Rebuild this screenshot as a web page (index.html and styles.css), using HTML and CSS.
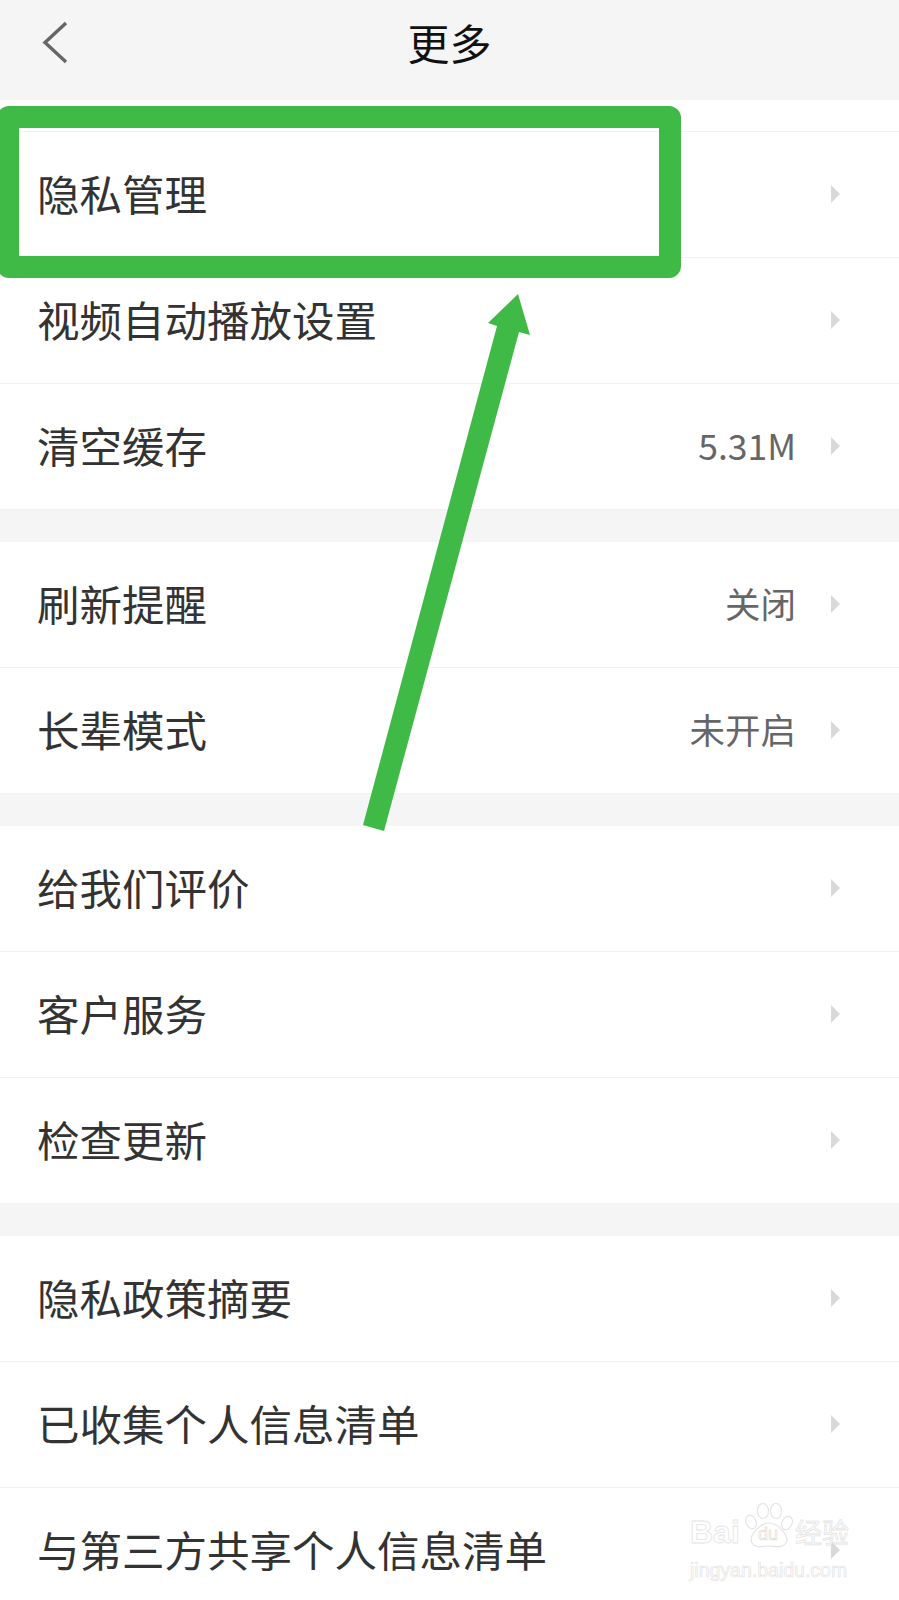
FILE: index.html
```html
<!DOCTYPE html>
<html>
	<head>
		<meta charset="UTF-8">
		<title>更多</title>
		<link rel="stylesheet" href="styles.css">
	</head>
	<body>
		<div class="wrap">
			<div class="top">
				<svg class="back" width="30" height="46" viewBox="0 0 30 46">
					<polyline points="24,3 3,22.5 24,42" fill="none" stroke="#666" stroke-width="3.4"/>
				</svg>
				<div class="title">更多</div>
			</div>
			<div class="strip"></div>
			<div class="group">
				<div class="row"><div class="name">隐私管理</div><div class="arrow"></div></div>
				<div class="row"><div class="name">视频自动播放设置</div><div class="arrow"></div></div>
				<div class="row"><div class="name">清空缓存</div><div class="val">5.31M</div><div class="arrow"></div></div>
			</div>
			<div class="group">
				<div class="row"><div class="name">刷新提醒</div><div class="val">关闭</div><div class="arrow"></div></div>
				<div class="row"><div class="name">长辈模式</div><div class="val">未开启</div><div class="arrow"></div></div>
			</div>
			<div class="group">
				<div class="row"><div class="name">给我们评价</div><div class="arrow"></div></div>
				<div class="row"><div class="name">客户服务</div><div class="arrow"></div></div>
				<div class="row"><div class="name">检查更新</div><div class="arrow"></div></div>
			</div>
			<div class="group">
				<div class="row"><div class="name">隐私政策摘要</div><div class="arrow"></div></div>
				<div class="row"><div class="name">已收集个人信息清单</div><div class="arrow"></div></div>
				<div class="row"><div class="name">与第三方共享个人信息清单</div><div class="arrow"></div></div>
			</div>

			<!-- 标注 -->
			<div class="mark-box"></div>
			<svg class="mark-arrow" width="899" height="1600" viewBox="0 0 899 1600">
				<polygon points="518,294 530,335 519,332 384,831 363,825 497,326 488,323" fill="#3fba46"/>
			</svg>

			<!-- 水印 -->
			<div class="water">
				<div class="water-top">
					<span class="water-bai">Bai</span>
					<div class="water-paw">
						<svg width="50" height="46" viewBox="0 0 50 46">
							<g fill="rgba(255,255,255,.7)" stroke="#e4e4e4" stroke-width="1.2">
								<ellipse cx="7" cy="19" rx="5" ry="7" transform="rotate(-25 7 19)"/>
								<ellipse cx="19" cy="8" rx="5.5" ry="7.5"/>
								<ellipse cx="32" cy="8" rx="5.5" ry="7.5"/>
								<ellipse cx="43" cy="20" rx="5" ry="7" transform="rotate(25 43 20)"/>
								<path d="M25 20C34 20 46 33 42 40C38 46 31 43 25 43C19 43 12 46 8 40C4 33 16 20 25 20Z"/>
							</g>
						</svg>
						<span class="water-du">du</span>
					</div>
					<span class="water-cn">经验</span>
				</div>
				<div class="water-url">jingyan.baidu.com</div>
			</div>
		</div>
	</body>
</html>
```

FILE: styles.css
```css
*{
	margin: 0;
	padding: 0;
	box-sizing: border-box;
}
html,body{
	height: 1600px;
	overflow: hidden;
}
body{
	background-color: #f5f5f5;
	font-family: "Noto Sans CJK SC", "Noto Sans", sans-serif;
}
.wrap{
	width: 899px;
	height: 1600px;
	position: relative;
	overflow: hidden;
}
.top{
	height: 100px;
	background-color: #f5f5f5;
	display: flex;
	justify-content: center;
	position: relative;
}
.back{
	position: absolute;
	left: 42px;
	top: 20px;
}
.title{
	font-size: 42px;
	color: #111;
	line-height: 83px;
	height: 83px;
}
.strip{
	height: 32px;
	background-color: #fff;
	border-bottom: 1px solid #f2f2f2;
}
.group{
	background-color: #fff;
	margin-bottom: 32px;
}
.row{
	height: 126px;
	padding: 0 59px 0 37px;
	border-bottom: 1px solid #f2f2f2;
	display: flex;
	align-items: center;
}
.name{
	flex: 1;
	font-size: 42.5px;
	color: #333;
	margin-bottom: 5px;
}
.val{
	font-size: 35.5px;
	color: #666;
	margin-right: 35px;
	margin-bottom: 5px;
}
.arrow{
	width: 0;
	height: 0;
	margin-bottom: 2px;
	border-left: 9px solid #d9d9d9;
	border-top: 9px solid transparent;
	border-bottom: 9px solid transparent;
}
.mark-box{
	position: absolute;
	left: -3px;
	top: 106px;
	width: 684px;
	height: 172px;
	border: 22px solid #3fba46;
	border-radius: 12px;
}
.mark-arrow{
	position: absolute;
	left: 0;
	top: 0;
}
.water{
	position: absolute;
	left: 690px;
	top: 1503px;
	width: 160px;
	color: rgba(255,255,255,.7);
	-webkit-text-stroke: .8px #e4e4e4;
}
.water-top{
	display: flex;
	align-items: flex-end;
	height: 46px;
}
.water-bai{
	font-family: "Liberation Sans", sans-serif;
	font-size: 32px;
	font-weight: bold;
	line-height: 34px;
	width: 54px;
}
.water-paw{
	width: 50px;
	height: 46px;
	position: relative;
}
.water-du{
	position: absolute;
	left: 14px;
	top: 21px;
	font-family: "Liberation Sans", sans-serif;
	font-size: 18px;
	line-height: 20px;
	-webkit-text-stroke: .6px #d8d8d8;
}
.water-cn{
	font-size: 27px;
	line-height: 34px;
	margin-left: 1px;
}
.water-url{
	margin-top: 11px;
	font-family: "Liberation Sans", sans-serif;
	font-size: 19.5px;
	line-height: 20px;
	white-space: nowrap;
	-webkit-text-stroke: .7px #e4e4e4;
}
```
